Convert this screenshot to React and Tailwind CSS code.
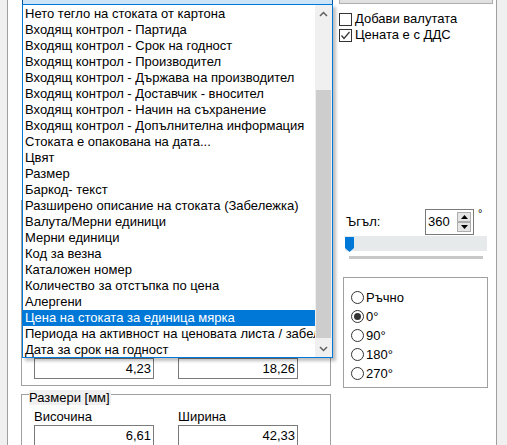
import React from "react";

const items = [
  "Нето тегло на стоката от картона",
  "Входящ контрол - Партида",
  "Входящ контрол - Срок на годност",
  "Входящ контрол - Производител",
  "Входящ контрол - Държава на производител",
  "Входящ контрол - Доставчик - вносител",
  "Входящ контрол - Начин на съхранение",
  "Входящ контрол - Допълнителна информация",
  "Стоката е опакована на дата...",
  "Цвят",
  "Размер",
  "Баркод- текст",
  "Разширено описание на стоката (Забележка)",
  "Валута/Мерни единици",
  "Мерни единици",
  "Код за везна",
  "Каталожен номер",
  "Количество за отстъпка по цена",
  "Алергени",
  "Цена на стоката за единица мярка",
  "Периода на активност на ценовата листа / забележка",
  "Дата за срок на годност",
];

function Chevron({ up }) {
  return (
    <svg width="9" height="6" viewBox="0 0 9 6">
      <polyline
        points={up ? "1,5 4.5,1.5 8,5" : "1,1 4.5,4.5 8,1"}
        fill="none"
        stroke="#606060"
        strokeWidth="1.5"
      />
    </svg>
  );
}

function Checkbox({ checked, label }) {
  return (
    <div className="flex items-center h-[16px]">
      <div className="w-[13px] h-[13px] border border-[#333333] bg-white flex items-center justify-center">
        {checked && (
          <svg width="11" height="11" viewBox="0 0 11 11">
            <polyline points="1.5,5.5 4,8.5 9.5,2" fill="none" stroke="#333333" strokeWidth="1.2" />
          </svg>
        )}
      </div>
      <span className="ml-[3px] leading-[16px]">{label}</span>
    </div>
  );
}

function Radio({ checked, label }) {
  return (
    <div className="flex items-center h-[19px]">
      <div className="w-[13px] h-[13px] rounded-full border border-[#333333] bg-white flex items-center justify-center">
        {checked && <div className="w-[7px] h-[7px] rounded-full bg-[#333333]" />}
      </div>
      <span className="ml-[2px] leading-[16px]">{label}</span>
    </div>
  );
}

function TextBox({ value }) {
  return (
    <div className="w-[120px] h-[21px] shrink-0 border border-[#7a7a7a] bg-white text-right pr-[2px] leading-[19px]">
      {value}
    </div>
  );
}

export default function App() {
  return (
    <div className="w-[507px] h-[445px] overflow-hidden relative flex bg-[#f0f0f0] font-['Liberation_Sans',Arial,sans-serif] text-[13px] text-black">
      <div className="w-[7px] shrink-0" />
      <div className="w-px shrink-0 bg-[#a0a0a0]" />
      <div className="w-[488px] shrink-0 bg-white relative flex">
        {/* left column */}
        <div className="w-[329px] shrink-0 pl-[13px] flex flex-col">
          <div className="shrink-0 mt-[200px] w-[310px] h-[186px] border border-[#a0a0a0] flex flex-col justify-end pb-[6px] pl-[12px]">
            <div className="flex gap-[24px]">
              <TextBox value="4,23" />
              <TextBox value="18,26" />
            </div>
          </div>
          <div className="shrink-0 mt-[8px] w-[310px] h-[80px] border border-[#a0a0a0] flex flex-col">
            <div className="-mt-[5px] ml-[7px] w-fit bg-[#f0f0f0] h-[15px] leading-[15px] pr-[1px]">Размери [мм]</div>
            <div className="pl-[12px] mt-[4px] flex gap-[24px]">
              <div className="w-[120px] flex flex-col">
                <div className="h-[15px] leading-[15px]">Височина</div>
                <div className="mt-[1px]"><TextBox value="6,61" /></div>
              </div>
              <div className="w-[120px] flex flex-col">
                <div className="h-[15px] leading-[15px]">Ширина</div>
                <div className="mt-[1px]"><TextBox value="42,33" /></div>
              </div>
            </div>
          </div>
        </div>

        {/* right column */}
        <div className="flex-1 flex flex-col pl-[2px]">
          <div className="shrink-0 w-[154px] h-[4px] bg-[#e1e1e1] border-x border-b border-[#adadad]" />
          <div className="shrink-0 mt-[7px]">
            <Checkbox label="Добави валутата" />
            <Checkbox checked label="Цената е с ДДС" />
          </div>
          <div className="shrink-0 mt-[166px] flex items-start pl-[7px]">
            <span className="mt-[5px] leading-[16px] w-[79px]">Ъгъл:</span>
            <div className="w-[49px] h-[26px] border border-[#7a7a7a] bg-white flex items-center pl-[2px]">
              <span className="flex-1 leading-[16px]">360</span>
              <div className="flex flex-col mr-[2px]">
                <div className="w-[14px] h-[10px] bg-[#e5e5e5] border border-[#adadad] flex items-center justify-center">
                  <svg width="7" height="4" viewBox="0 0 7 4"><polygon points="0,4 3.5,0 7,4" fill="#000" /></svg>
                </div>
                <div className="w-[14px] h-[10px] bg-[#e5e5e5] border border-[#adadad] flex items-center justify-center">
                  <svg width="7" height="4" viewBox="0 0 7 4"><polygon points="0,0 3.5,4 7,0" fill="#000" /></svg>
                </div>
              </div>
            </div>
            <span className="ml-[4px] -mt-[3px] text-[11px] leading-[14px]">°</span>
          </div>
          <div className="shrink-0 ml-[6px] mt-[1px] w-[142px] h-[15px] bg-[#e7eaea] relative">
            <svg className="absolute left-0 top-[1px]" width="9" height="15" viewBox="0 0 9 15">
              <polygon points="0,0 9,0 9,11 4.5,15 0,11" fill="#0078d7" />
            </svg>
          </div>
          <div className="shrink-0 ml-[10px] mt-[5px] w-[134px] h-[3px] bg-[#c8c8c8]" />
          <div className="shrink-0 ml-[4px] mt-[18px] w-[145px] h-[111px] border border-[#a0a0a0] pt-[10px] pl-[7px]">
            <Radio label="Ръчно" />
            <Radio checked label="0°" />
            <Radio label="90°" />
            <Radio label="180°" />
            <Radio label="270°" />
          </div>
        </div>
      </div>
      <div className="w-px shrink-0 bg-[#a0a0a0]" />
      <div className="flex-1" />

      {/* opened combobox dropdown overlay */}
      <div className="absolute left-[22px] top-0 w-[311px] flex flex-col">
        <div className="h-[4px] bg-[#cce4f7] border-x border-[#005499]" />
        <div className="h-[354px] border border-[#0078d7] bg-white flex shadow-[3px_3px_3px_rgba(0,0,0,0.25)]">
          <div className="flex-1 pt-px overflow-hidden">
            {items.map((t, i) => (
              <div
                key={i}
                className={
                  "h-[16px] leading-[16px] pl-[2px] whitespace-nowrap overflow-hidden " +
                  (i === 19 ? "bg-[#0078d7] text-white" : "")
                }
              >
                {t}
              </div>
            ))}
          </div>
          <div className="w-[17px] bg-[#f0f0f0] flex flex-col">
            <div className="h-[17px] flex items-center justify-center"><Chevron up /></div>
            <div className="flex-1 relative">
              <div className="mt-[68px] mx-[1px] h-[248px] bg-[#cdcdcd]" />
            </div>
            <div className="h-[17px] flex items-center justify-center"><Chevron /></div>
          </div>
        </div>
      </div>
    </div>
  );
}
